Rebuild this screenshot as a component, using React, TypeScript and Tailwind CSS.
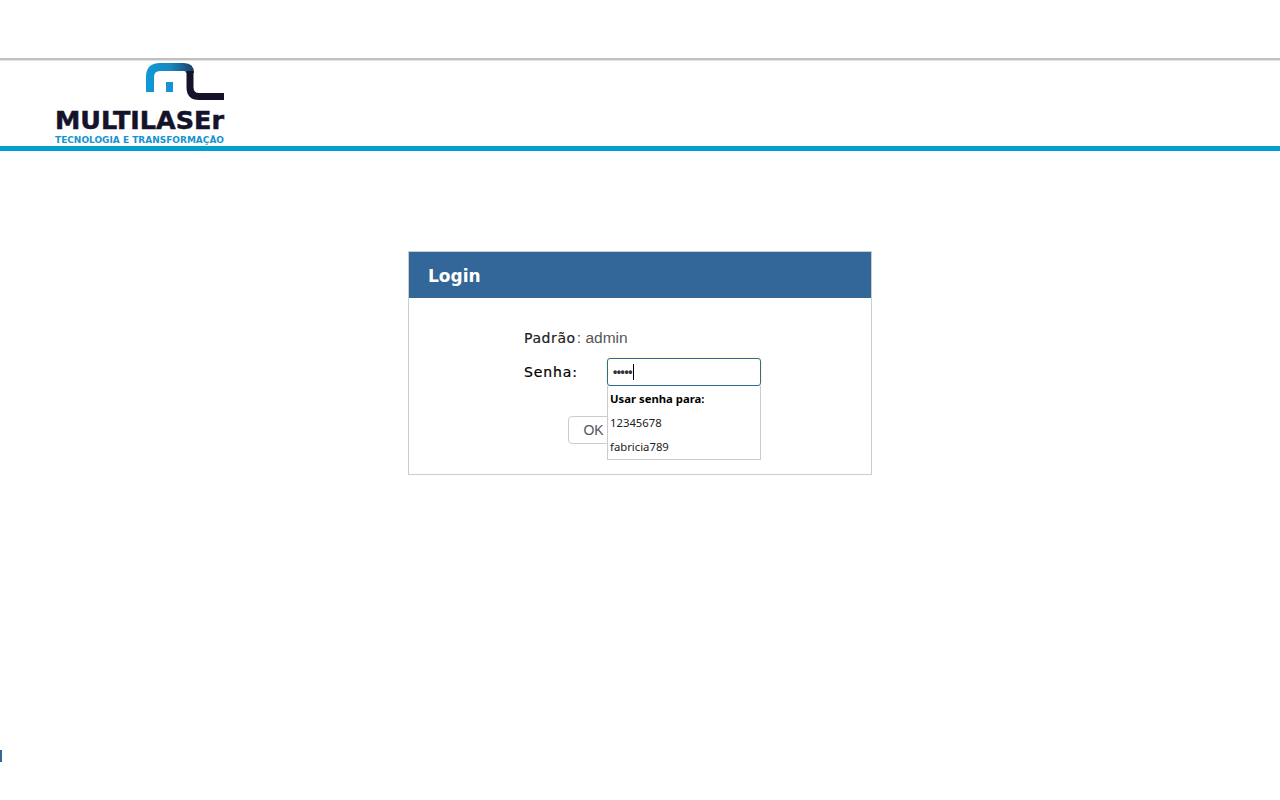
function Logo() {
  return (
    <svg width="180" height="84" viewBox="0 0 180 84" className="block">
      <defs>
        <linearGradient id="arc" gradientUnits="userSpaceOnUse" x1="96" y1="0" x2="145" y2="0">
          <stop offset="0" stopColor="#0e9ad8" />
          <stop offset="0.5" stopColor="#1b86c0" />
          <stop offset="1" stopColor="#1d3a5f" />
        </linearGradient>
      </defs>
      <path d="M100 30 V15 Q100 5 110 5 H134 Q140 5 140 11" fill="none" stroke="url(#arc)" strokeWidth="8" />
      <path d="M140 9 V25 Q140 34.500 149 34.500 H174" fill="none" stroke="#15122b" strokeWidth="7" />
      <rect x="116" y="20" width="7" height="10" fill="#1593d2" />
      <text x="5" y="67" textLength="169" lengthAdjust="spacingAndGlyphs" fontFamily="'DejaVu Sans', sans-serif" fontWeight="700" fontSize="24" fill="#15122b" stroke="#15122b" strokeWidth="0.5">MULTILASEr</text>
      <text x="5" y="81" textLength="169" lengthAdjust="spacingAndGlyphs" fontFamily="'DejaVu Sans', sans-serif" fontWeight="700" fontSize="9" fill="#1593d2">TECNOLOGIA E TRANSFORMAÇÃO</text>
    </svg>
  );
}

export default function App() {
  return (
    <div className="relative min-h-[800px] bg-white font-['Liberation_Sans',sans-serif]">
      <div className="h-[58px]" />
      <div className="h-[3px] border-b border-[#e4e4e4] bg-[#c0c0c0]" />
      <div className="flex h-[85px] items-end pl-[50px]">
        <Logo />
      </div>
      <div className="h-[5px] bg-[#009fd0]" />

      <main className="mx-auto mt-[100px] w-[464px] border border-[#cccccc]">
        <div className="flex h-[46px] items-center bg-[#336699] pl-[19px] pt-[4px] font-['DejaVu_Sans',sans-serif] text-[17px] font-bold text-white">
          Login
        </div>
        <div className="h-[176px] pl-[115px] pt-[30px]">
          <div className="flex h-[20px] items-center text-[15.500px] text-[#555555]">
            <span className="font-['DejaVu_Sans',sans-serif] text-[14px] tracking-[0.6px] text-[#222222] [-webkit-text-stroke:0.2px_#222222]">Padrão</span>
            <span className="pl-[1px]">: admin</span>
          </div>
          <div className="mt-[10px] flex items-center">
            <label className="w-[83px] font-['DejaVu_Sans',sans-serif] text-[14px] tracking-[0.9px] text-black [-webkit-text-stroke:0.2px_#000000]">Senha:</label>
            <div className="relative">
              <div className="flex h-[28px] w-[154px] items-center rounded-[3px] border border-[#2f6a8f] bg-white pl-[5px] shadow-[0_0_3px_#fff0a0]">
                <span className="text-[12px] font-bold leading-none tracking-[-0.4px] text-[#333333]">•••••</span>
                <span className="ml-[1px] h-[16px] w-px bg-black" />
              </div>
              <div className="absolute left-0 top-[28px] z-10 flex h-[74px] w-[154px] flex-col border border-t-0 border-[#cccccc] bg-white pl-[2px] pt-[1px] font-['Noto_Sans',sans-serif] text-[11.300px] text-[#222222]">
                <div className="flex h-[24px] items-center font-bold text-black">Usar senha para:</div>
                <div className="flex h-[24px] items-center">12345678</div>
                <div className="flex h-[24px] items-center">fabricia789</div>
              </div>
            </div>
          </div>
          <div className="mt-[30px] pl-[44px]">
            <button className="h-[28px] w-[61px] rounded-[4px] border border-[#cccccc] bg-white pr-[10px] text-[14px] text-[#555555]">
              OK
            </button>
          </div>
        </div>
      </main>

      <div className="absolute left-0 top-[750px] h-[12px] w-[2px] bg-[#336699]" />
    </div>
  );
}
